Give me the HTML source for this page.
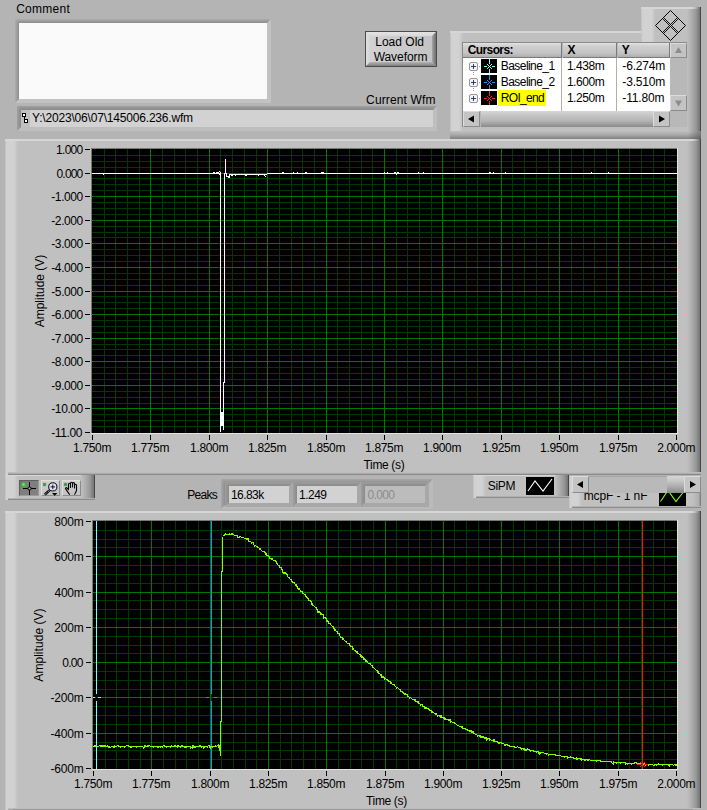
<!DOCTYPE html>
<html><head><meta charset="utf-8"><title>Waveform viewer</title>
<style>
html,body{margin:0;padding:0;}
body{width:707px;height:810px;background:#b4b4b4;position:relative;overflow:hidden;
 font-family:"Liberation Sans",sans-serif;font-size:12px;color:#000;}
.a{position:absolute;}
.t{position:absolute;white-space:nowrap;line-height:14px;height:14px;}
.frame{position:absolute;background:#c0c0c0;}
.frame>.l{position:absolute;left:0;top:0;bottom:0;width:13px;background:linear-gradient(to right,#bcbcbc 0,#cecece 1px,#d2d2d2 2px,#d2d2d2 9px,#c0c0c0 13px);}
.frame>.r{position:absolute;right:0;top:0;bottom:0;width:14px;background:linear-gradient(to right,#c0c0c0 0,#b0b0b0 4px,#989898 9px,#787878 12.5px,#484848 13px,#444 14px);}
.frame>.tp{position:absolute;left:0;right:0;top:0;height:2px;background:linear-gradient(to right,#d6d6d6 0,#d6d6d6 calc(100% - 9px),rgba(214,214,214,0) calc(100% - 2px));}
.frame>.bt{position:absolute;left:3px;right:0;bottom:0;height:2px;background:linear-gradient(to bottom,#b2b2b2 0,#b2b2b2 50%,#8c8c8c 50%,#8c8c8c 100%);}
.frame>.bt3{position:absolute;left:3px;right:0;bottom:0;height:3px;background:linear-gradient(to bottom,#bcbcbc 0,#bcbcbc 33%,#acacac 33%,#acacac 67%,#8a8a8a 67%,#8a8a8a 100%);}
.sunk{position:absolute;background:#d2d2d2;box-sizing:border-box;}
svg{position:absolute;left:0;top:0;}
svg text{font-family:"Liberation Sans",sans-serif;font-size:12px;fill:#000;}
</style></head>
<body>
<div class="t" style="left:16.19px;top:2px;letter-spacing:0.264px;">Comment</div>
<div class="a" style="left:15px;top:19px;width:256px;height:84px;background:#c2c2c2;"></div>
<div class="a" style="left:15px;top:19px;width:256px;height:4px;background:linear-gradient(to bottom,#adadad,#8c8c8c);clip-path:polygon(0 0,100% 0,252px 100%,4px 100%);"></div>
<div class="a" style="left:15px;top:19px;width:4px;height:84px;background:linear-gradient(to right,#adadad,#8c8c8c);clip-path:polygon(0 0,100% 4px,100% 80px,0 100%);"></div>
<div class="a" style="left:19px;top:23px;width:248px;height:76px;background:#fafafa;"></div>
<div class="a" style="left:17px;top:106px;width:420px;height:25px;background:#bebebe;"></div>
<div class="a" style="left:17px;top:106px;width:420px;height:4px;background:linear-gradient(to bottom,#a0a0a0,#888888);clip-path:polygon(0 0,100% 0,416px 100%,4px 100%);"></div>
<div class="a" style="left:17px;top:106px;width:4px;height:25px;background:linear-gradient(to right,#a0a0a0,#888888);clip-path:polygon(0 0,100% 4px,100% 21px,0 100%);"></div>
<div class="a" style="left:21px;top:110px;width:412px;height:17px;background:#d2d2d2;"></div>
<div class="a" style="left:21px;top:110px;width:9px;height:17px;background:#c0c0c0;"></div>
<svg width="707" height="810" shape-rendering="crispEdges"><rect x="22" y="113" width="4" height="4" fill="#000"/><rect x="23" y="114" width="2" height="2" fill="#fff"/><rect x="24" y="117" width="1" height="3" fill="#000"/><rect x="24" y="119" width="4" height="4" fill="#000"/><rect x="25" y="120" width="2" height="2" fill="#fff"/></svg>
<div class="t" style="left:32.04px;top:111px;letter-spacing:-0.187px;">Y:\2023\06\07\145006.236.wfm</div>
<div class="t" style="left:366.09px;top:92.6px;letter-spacing:0.140px;">Current Wfm</div>
<div class="a" style="left:365px;top:31px;width:72px;height:36px;background:#4c4c4c;"></div>
<div class="a" style="left:366px;top:32px;width:70px;height:34px;background:linear-gradient(to right,#d4d4d4 0,#cdcdcd 30%,#c3c3c3 100%);"></div>
<div class="a" style="left:366px;top:32px;width:70px;height:4px;background:linear-gradient(to bottom,#e4e4e4,#d8d8d8);clip-path:polygon(0 0,100% 0,66px 100%,4px 100%);"></div>
<div class="a" style="left:366px;top:32px;width:4px;height:34px;background:linear-gradient(to right,#e0e0e0,#d4d4d4);clip-path:polygon(0 0,100% 4px,100% 30px,0 100%);"></div>
<div class="a" style="left:432px;top:32px;width:4px;height:34px;background:linear-gradient(to right,#a6a6a6,#6c6c6c);clip-path:polygon(0 4px,100% 0,100% 100%,0 30px);"></div>
<div class="a" style="left:366px;top:62px;width:70px;height:4px;background:linear-gradient(to bottom,#b4b4b4,#7e7e7e);clip-path:polygon(4px 0,66px 0,100% 100%,0 100%);"></div>
<div class="t" style="left:375.22px;top:34.7px;letter-spacing:0.008px;">Load Old</div>
<div class="t" style="left:373.65px;top:49.6px;letter-spacing:-0.061px;">Waveform</div>
<div class="frame" style="left:450px;top:31px;width:251px;height:108px;"><div class="l"></div><div class="r"></div><div class="tp"></div><div class="a" style="left:0;right:0;bottom:0;height:8px;background:linear-gradient(to bottom,#c0c0c0,#a8a8a8 50%,#808080 100%);"></div><div class="a" style="right:0;bottom:0;width:13px;height:8px;background:linear-gradient(to right,rgba(0,0,0,0),rgba(60,60,60,.5));"></div></div>
<div class="frame" style="left:641px;top:7px;width:60px;height:35px;"><div class="l" style="width:14px;background:linear-gradient(to right,#bcbcbc 0,#cecece 1px,#d2d2d2 2px,#d2d2d2 11px,#c0c0c0 14px)"></div><div class="r" style="width:14px"></div><div class="tp"></div></div>
<svg class="a" style="left:654px;top:9px" width="33" height="33" viewBox="0 0 33 33"><g fill="none" stroke="#000" stroke-width="1"><path d="M16.5 1.5 L31.5 16.5 L16.5 31.5 L1.5 16.5 Z"/><path d="M8.5 9.5 L23.5 24.5 M9.5 8.5 L24.5 23.5 M23.5 8.5 L8.5 23.5 M24.5 9.5 L9.5 24.5" stroke-width="0.9"/></g></svg>
<div class="a" style="left:462px;top:42px;width:225px;height:85px;background:#8a8a8a;"></div>
<div class="a" style="left:463px;top:43px;width:224px;height:84px;background:#b8b8b8;"></div>
<div class="a" style="left:463px;top:58px;width:207px;height:53px;background:#fff;"></div>
<div class="a" style="left:463px;top:43px;width:99px;height:15px;box-sizing:border-box;border-right:1px solid #7a7a7a;border-bottom:1px solid #7a7a7a;background:linear-gradient(to bottom,#e4e4e4 0,#cfcfcf 3px,#c4c4c4 10px,#a8a8a8 15px);"></div>
<div class="a" style="left:563px;top:43px;width:54px;height:15px;box-sizing:border-box;border-right:1px solid #7a7a7a;border-bottom:1px solid #7a7a7a;background:linear-gradient(to bottom,#e4e4e4 0,#cfcfcf 3px,#c4c4c4 10px,#a8a8a8 15px);"></div>
<div class="a" style="left:618px;top:43px;width:52px;height:15px;box-sizing:border-box;border-right:1px solid #7a7a7a;border-bottom:1px solid #7a7a7a;background:linear-gradient(to bottom,#e4e4e4 0,#cfcfcf 3px,#c4c4c4 10px,#a8a8a8 15px);"></div>
<div class="a" style="left:561px;top:58px;width:1px;height:53px;background:#b0b0b0;"></div>
<div class="a" style="left:616px;top:58px;width:1px;height:53px;background:#b0b0b0;"></div>
<div class="t" style="left:467.81px;top:43.1px;letter-spacing:-0.623px;"><b>Cursors:</b></div>
<div class="t" style="left:567.39px;top:43.1px;letter-spacing:0.207px;"><b>X</b></div>
<div class="t" style="left:621.79px;top:43.1px;letter-spacing:0.395px;"><b>Y</b></div>
<svg class="a" style="left:469px;top:62px" width="12" height="9" viewBox="0 0 12 9"><rect x="0.5" y="0.5" width="8" height="8" rx="1.5" fill="#f4f4f4" stroke="#969696"/><path d="M2 4.5h5M4.5 2v5" stroke="#283a90" stroke-width="1"/><rect x="10" y="4" width="1" height="1" fill="#a0a0a0"/></svg>
<svg class="a" style="left:481px;top:59px" width="16" height="14" viewBox="0 0 16 14"><rect width="16" height="14" fill="#000"/><g stroke="#7fffff" stroke-width="1" fill="none"><path d="M8.5 0v5M8.5 10v4M3 7.5h3M11 7.5h3M6 5l5 5M11 5l-5 5"/></g></svg>
<div class="t" style="left:500.82px;top:58.6px;letter-spacing:-0.568px;">Baseline_1</div>
<div class="t" style="left:566.89px;top:58.6px;letter-spacing:-0.444px;">1.438m</div>
<div class="t" style="left:622.37px;top:58.6px;letter-spacing:-0.183px;">-6.274m</div>
<svg class="a" style="left:469px;top:78px" width="12" height="9" viewBox="0 0 12 9"><rect x="0.5" y="0.5" width="8" height="8" rx="1.5" fill="#f4f4f4" stroke="#969696"/><path d="M2 4.5h5M4.5 2v5" stroke="#283a90" stroke-width="1"/><rect x="10" y="4" width="1" height="1" fill="#a0a0a0"/></svg>
<svg class="a" style="left:481px;top:75px" width="16" height="14" viewBox="0 0 16 14"><rect width="16" height="14" fill="#000"/><g stroke="#2090ff" stroke-width="1" fill="none"><path d="M8.5 0v5M8.5 10v4M3 7.5h3M11 7.5h3M6 5l5 5M11 5l-5 5"/></g></svg>
<div class="t" style="left:500.82px;top:74.6px;letter-spacing:-0.566px;">Baseline_2</div>
<div class="t" style="left:566.89px;top:74.6px;letter-spacing:-0.444px;">1.600m</div>
<div class="t" style="left:622.37px;top:74.6px;letter-spacing:-0.183px;">-3.510m</div>
<svg class="a" style="left:469px;top:94px" width="12" height="9" viewBox="0 0 12 9"><rect x="0.5" y="0.5" width="8" height="8" rx="1.5" fill="#f4f4f4" stroke="#969696"/><path d="M2 4.5h5M4.5 2v5" stroke="#283a90" stroke-width="1"/><rect x="10" y="4" width="1" height="1" fill="#a0a0a0"/></svg>
<svg class="a" style="left:481px;top:91px" width="16" height="14" viewBox="0 0 16 14"><rect width="16" height="14" fill="#000"/><g stroke="#ff2020" stroke-width="1" fill="none"><path d="M8.5 0v5M8.5 10v4M3 7.5h3M11 7.5h3M6 5l5 5M11 5l-5 5"/></g></svg>
<div class="a" style="left:498px;top:90px;width:48px;height:16px;background:#ffff00;"></div>
<div class="t" style="left:500.82px;top:90.6px;letter-spacing:-0.679px;">ROI_end</div>
<div class="t" style="left:566.89px;top:90.6px;letter-spacing:-0.444px;">1.250m</div>
<div class="t" style="left:622.37px;top:90.6px;letter-spacing:-0.183px;">-11.80m</div>
<div class="a" style="left:473px;top:72px;width:1px;height:3px;background:repeating-linear-gradient(to bottom,#999 0,#999 1px,transparent 1px,transparent 2px);"></div>
<div class="a" style="left:473px;top:88px;width:1px;height:3px;background:repeating-linear-gradient(to bottom,#999 0,#999 1px,transparent 1px,transparent 2px);"></div>
<div class="a" style="left:670px;top:43px;width:17px;height:15px;box-sizing:border-box;border:1px solid;border-color:#dcdcdc #8c8c8c #8c8c8c #dcdcdc;background:#c4c4c4;"></div>
<svg width="707" height="810"><polygon points="675,53 682,53 678.5,47" fill="#8c8c8c"/></svg>
<div class="a" style="left:670px;top:95px;width:17px;height:16px;box-sizing:border-box;border:1px solid;border-color:#dcdcdc #8c8c8c #8c8c8c #dcdcdc;background:#c4c4c4;"></div>
<svg width="707" height="810"><polygon points="675,100.5 682,100.5 678.5,106.5" fill="#8c8c8c"/></svg>
<div class="a" style="left:481px;top:111px;width:172px;height:16px;background:linear-gradient(to bottom,#d6d6d6 0,#c6c6c6 4px,#b4b4b4 10px,#8a8a8a 16px);"></div>
<div class="a" style="left:463px;top:111px;width:17px;height:16px;box-sizing:border-box;border:1px solid;border-color:#dcdcdc #8c8c8c #8c8c8c #dcdcdc;background:#c4c4c4;"></div>
<svg width="707" height="810"><polygon points="474,115.5 474,122.5 468,119" fill="#000"/></svg>
<div class="a" style="left:653px;top:111px;width:17px;height:16px;box-sizing:border-box;border:1px solid;border-color:#dcdcdc #8c8c8c #8c8c8c #dcdcdc;background:#c4c4c4;"></div>
<svg width="707" height="810"><polygon points="659,115.5 659,122.5 665,119" fill="#000"/></svg>
<div class="frame" style="left:5px;top:139px;width:696px;height:336px;"><div class="l"></div><div class="r"></div><div class="tp"></div><div class="bt3"></div></div>
<div class="a" style="left:91px;top:148px;width:587px;height:286px;background:#e4e4e4;"></div>
<div class="a" style="left:91px;top:148px;width:586px;height:285px;background:#787878;"></div>
<div class="a" style="left:92px;top:149px;width:585px;height:284px;background:#000;"></div>
<div class="frame" style="left:5px;top:511px;width:696px;height:300px;"><div class="l"></div><div class="r"></div><div class="tp"></div><div class="bt3"></div></div>
<div class="a" style="left:92px;top:520px;width:586px;height:250px;background:#e4e4e4;"></div>
<div class="a" style="left:92px;top:520px;width:585px;height:249px;background:#787878;"></div>
<div class="a" style="left:93px;top:521px;width:584px;height:248px;background:#000;"></div>
<div class="a" style="left:13px;top:809px;width:680px;height:1px;background:#9a9a9a;"></div>
<svg width="707" height="810" shape-rendering="crispEdges"><rect x="104" y="149" width="1" height="284" fill="#003a00"/><rect x="115" y="149" width="1" height="284" fill="#003a00"/><rect x="127" y="149" width="1" height="284" fill="#003a00"/><rect x="139" y="149" width="1" height="284" fill="#003a00"/><rect x="162" y="149" width="1" height="284" fill="#003a00"/><rect x="174" y="149" width="1" height="284" fill="#003a00"/><rect x="185" y="149" width="1" height="284" fill="#003a00"/><rect x="197" y="149" width="1" height="284" fill="#003a00"/><rect x="220" y="149" width="1" height="284" fill="#003a00"/><rect x="232" y="149" width="1" height="284" fill="#003a00"/><rect x="244" y="149" width="1" height="284" fill="#003a00"/><rect x="256" y="149" width="1" height="284" fill="#003a00"/><rect x="279" y="149" width="1" height="284" fill="#003a00"/><rect x="291" y="149" width="1" height="284" fill="#003a00"/><rect x="302" y="149" width="1" height="284" fill="#003a00"/><rect x="314" y="149" width="1" height="284" fill="#003a00"/><rect x="337" y="149" width="1" height="284" fill="#003a00"/><rect x="349" y="149" width="1" height="284" fill="#003a00"/><rect x="361" y="149" width="1" height="284" fill="#003a00"/><rect x="372" y="149" width="1" height="284" fill="#003a00"/><rect x="396" y="149" width="1" height="284" fill="#003a00"/><rect x="407" y="149" width="1" height="284" fill="#003a00"/><rect x="419" y="149" width="1" height="284" fill="#003a00"/><rect x="431" y="149" width="1" height="284" fill="#003a00"/><rect x="454" y="149" width="1" height="284" fill="#003a00"/><rect x="466" y="149" width="1" height="284" fill="#003a00"/><rect x="477" y="149" width="1" height="284" fill="#003a00"/><rect x="489" y="149" width="1" height="284" fill="#003a00"/><rect x="512" y="149" width="1" height="284" fill="#003a00"/><rect x="524" y="149" width="1" height="284" fill="#003a00"/><rect x="536" y="149" width="1" height="284" fill="#003a00"/><rect x="548" y="149" width="1" height="284" fill="#003a00"/><rect x="571" y="149" width="1" height="284" fill="#003a00"/><rect x="583" y="149" width="1" height="284" fill="#003a00"/><rect x="594" y="149" width="1" height="284" fill="#003a00"/><rect x="606" y="149" width="1" height="284" fill="#003a00"/><rect x="629" y="149" width="1" height="284" fill="#003a00"/><rect x="641" y="149" width="1" height="284" fill="#003a00"/><rect x="653" y="149" width="1" height="284" fill="#003a00"/><rect x="664" y="149" width="1" height="284" fill="#003a00"/><rect x="92" y="155" width="585" height="1" fill="#003a00"/><rect x="92" y="161" width="585" height="1" fill="#003a00"/><rect x="92" y="167" width="585" height="1" fill="#003a00"/><rect x="92" y="178" width="585" height="1" fill="#003a00"/><rect x="92" y="184" width="585" height="1" fill="#003a00"/><rect x="92" y="190" width="585" height="1" fill="#003a00"/><rect x="92" y="202" width="585" height="1" fill="#003a00"/><rect x="92" y="208" width="585" height="1" fill="#003a00"/><rect x="92" y="214" width="585" height="1" fill="#003a00"/><rect x="92" y="226" width="585" height="1" fill="#003a00"/><rect x="92" y="232" width="585" height="1" fill="#003a00"/><rect x="92" y="237" width="585" height="1" fill="#003a00"/><rect x="92" y="249" width="585" height="1" fill="#003a00"/><rect x="92" y="255" width="585" height="1" fill="#003a00"/><rect x="92" y="261" width="585" height="1" fill="#003a00"/><rect x="92" y="273" width="585" height="1" fill="#003a00"/><rect x="92" y="279" width="585" height="1" fill="#003a00"/><rect x="92" y="285" width="585" height="1" fill="#003a00"/><rect x="92" y="296" width="585" height="1" fill="#003a00"/><rect x="92" y="302" width="585" height="1" fill="#003a00"/><rect x="92" y="308" width="585" height="1" fill="#003a00"/><rect x="92" y="320" width="585" height="1" fill="#003a00"/><rect x="92" y="326" width="585" height="1" fill="#003a00"/><rect x="92" y="332" width="585" height="1" fill="#003a00"/><rect x="92" y="344" width="585" height="1" fill="#003a00"/><rect x="92" y="349" width="585" height="1" fill="#003a00"/><rect x="92" y="355" width="585" height="1" fill="#003a00"/><rect x="92" y="367" width="585" height="1" fill="#003a00"/><rect x="92" y="373" width="585" height="1" fill="#003a00"/><rect x="92" y="379" width="585" height="1" fill="#003a00"/><rect x="92" y="391" width="585" height="1" fill="#003a00"/><rect x="92" y="397" width="585" height="1" fill="#003a00"/><rect x="92" y="403" width="585" height="1" fill="#003a00"/><rect x="92" y="414" width="585" height="1" fill="#003a00"/><rect x="92" y="420" width="585" height="1" fill="#003a00"/><rect x="92" y="426" width="585" height="1" fill="#003a00"/><rect x="150" y="149" width="1" height="284" fill="#007800"/><rect x="209" y="149" width="1" height="284" fill="#007800"/><rect x="267" y="149" width="1" height="284" fill="#007800"/><rect x="326" y="149" width="1" height="284" fill="#007800"/><rect x="384" y="149" width="1" height="284" fill="#007800"/><rect x="442" y="149" width="1" height="284" fill="#007800"/><rect x="501" y="149" width="1" height="284" fill="#007800"/><rect x="559" y="149" width="1" height="284" fill="#007800"/><rect x="618" y="149" width="1" height="284" fill="#007800"/><rect x="92" y="173" width="585" height="1" fill="#007800"/><rect x="92" y="196" width="585" height="1" fill="#007800"/><rect x="92" y="220" width="585" height="1" fill="#007800"/><rect x="92" y="243" width="585" height="1" fill="#007800"/><rect x="92" y="267" width="585" height="1" fill="#007800"/><rect x="92" y="291" width="585" height="1" fill="#007800"/><rect x="92" y="314" width="585" height="1" fill="#007800"/><rect x="92" y="338" width="585" height="1" fill="#007800"/><rect x="92" y="361" width="585" height="1" fill="#007800"/><rect x="92" y="385" width="585" height="1" fill="#007800"/><rect x="92" y="408" width="585" height="1" fill="#007800"/><rect x="92" y="435" width="1" height="5" fill="#000"/><rect x="150" y="435" width="1" height="5" fill="#000"/><rect x="209" y="435" width="1" height="5" fill="#000"/><rect x="267" y="435" width="1" height="5" fill="#000"/><rect x="326" y="435" width="1" height="5" fill="#000"/><rect x="384" y="435" width="1" height="5" fill="#000"/><rect x="442" y="435" width="1" height="5" fill="#000"/><rect x="501" y="435" width="1" height="5" fill="#000"/><rect x="559" y="435" width="1" height="5" fill="#000"/><rect x="618" y="435" width="1" height="5" fill="#000"/><rect x="676" y="435" width="1" height="5" fill="#000"/><rect x="85" y="149" width="5" height="1" fill="#000"/><rect x="85" y="173" width="5" height="1" fill="#000"/><rect x="85" y="196" width="5" height="1" fill="#000"/><rect x="85" y="220" width="5" height="1" fill="#000"/><rect x="85" y="243" width="5" height="1" fill="#000"/><rect x="85" y="267" width="5" height="1" fill="#000"/><rect x="85" y="291" width="5" height="1" fill="#000"/><rect x="85" y="314" width="5" height="1" fill="#000"/><rect x="85" y="338" width="5" height="1" fill="#000"/><rect x="85" y="361" width="5" height="1" fill="#000"/><rect x="85" y="385" width="5" height="1" fill="#000"/><rect x="85" y="408" width="5" height="1" fill="#000"/><rect x="85" y="432" width="5" height="1" fill="#000"/><rect x="92" y="173" width="129" height="1" fill="#ffffff"/><rect x="267" y="173" width="410" height="1" fill="#ffffff"/><rect x="229" y="174" width="38" height="1" fill="#ffffff"/><rect x="103" y="174" width="1" height="1" fill="#ffffff"/><rect x="213" y="172" width="1" height="1" fill="#ffffff"/><rect x="214" y="172" width="1" height="1" fill="#ffffff"/><rect x="216" y="172" width="1" height="1" fill="#ffffff"/><rect x="217" y="172" width="1" height="1" fill="#ffffff"/><rect x="218" y="172" width="1" height="1" fill="#ffffff"/><rect x="219" y="171" width="1" height="1" fill="#ffffff"/><rect x="219" y="174" width="1" height="1" fill="#ffffff"/><rect x="231" y="175" width="1" height="1" fill="#ffffff"/><rect x="232" y="175" width="1" height="1" fill="#ffffff"/><rect x="235" y="175" width="1" height="1" fill="#ffffff"/><rect x="245" y="175" width="1" height="1" fill="#ffffff"/><rect x="246" y="175" width="1" height="1" fill="#ffffff"/><rect x="258" y="175" width="1" height="1" fill="#ffffff"/><rect x="264" y="175" width="1" height="1" fill="#ffffff"/><rect x="265" y="176" width="1" height="1" fill="#ffffff"/><rect x="282" y="172" width="1" height="1" fill="#ffffff"/><rect x="283" y="172" width="1" height="1" fill="#ffffff"/><rect x="293" y="172" width="1" height="1" fill="#ffffff"/><rect x="297" y="172" width="1" height="1" fill="#ffffff"/><rect x="305" y="172" width="1" height="1" fill="#ffffff"/><rect x="306" y="172" width="1" height="1" fill="#ffffff"/><rect x="321" y="172" width="1" height="1" fill="#ffffff"/><rect x="322" y="172" width="1" height="1" fill="#ffffff"/><rect x="323" y="172" width="1" height="1" fill="#ffffff"/><rect x="384" y="172" width="1" height="1" fill="#ffffff"/><rect x="387" y="172" width="1" height="1" fill="#ffffff"/><rect x="394" y="172" width="1" height="1" fill="#ffffff"/><rect x="395" y="172" width="1" height="1" fill="#ffffff"/><rect x="397" y="172" width="1" height="1" fill="#ffffff"/><rect x="398" y="172" width="1" height="1" fill="#ffffff"/><rect x="418" y="172" width="1" height="1" fill="#ffffff"/><rect x="423" y="172" width="1" height="1" fill="#ffffff"/><rect x="489" y="172" width="1" height="1" fill="#ffffff"/><rect x="490" y="172" width="1" height="1" fill="#ffffff"/><rect x="493" y="172" width="1" height="1" fill="#ffffff"/><rect x="505" y="172" width="1" height="1" fill="#ffffff"/><rect x="591" y="172" width="1" height="1" fill="#ffffff"/><rect x="608" y="172" width="1" height="1" fill="#ffffff"/><rect x="396" y="174" width="1" height="1" fill="#ffffff"/><rect x="220" y="172" width="1" height="260" fill="#ffffff"/><rect x="224" y="173" width="1" height="210" fill="#ffffff"/><rect x="223" y="382" width="1" height="48" fill="#ffffff"/><rect x="221" y="412" width="2" height="14" fill="#ffffff"/><rect x="225" y="159" width="1" height="15" fill="#ffffff"/><rect x="226" y="173" width="1" height="4" fill="#ffffff"/><rect x="226" y="176" width="3" height="1" fill="#ffffff"/><rect x="228" y="177" width="2" height="1" fill="#ffffff"/><rect x="229" y="174" width="1" height="3" fill="#ffffff"/></svg>
<div class="t" style="left:56.09px;top:142.8px;letter-spacing:-0.712px;">1.000</div>
<div class="t" style="left:56.53px;top:166.8px;letter-spacing:-0.823px;">0.000</div>
<div class="t" style="left:51.27px;top:189.8px;letter-spacing:-0.405px;">-1.000</div>
<div class="t" style="left:51.27px;top:213.8px;letter-spacing:-0.405px;">-2.000</div>
<div class="t" style="left:51.27px;top:236.8px;letter-spacing:-0.405px;">-3.000</div>
<div class="t" style="left:51.27px;top:260.8px;letter-spacing:-0.405px;">-4.000</div>
<div class="t" style="left:51.27px;top:284.8px;letter-spacing:-0.405px;">-5.000</div>
<div class="t" style="left:51.27px;top:307.8px;letter-spacing:-0.405px;">-6.000</div>
<div class="t" style="left:51.27px;top:331.8px;letter-spacing:-0.405px;">-7.000</div>
<div class="t" style="left:51.27px;top:354.8px;letter-spacing:-0.405px;">-8.000</div>
<div class="t" style="left:51.27px;top:378.8px;letter-spacing:-0.405px;">-9.000</div>
<div class="t" style="left:51.27px;top:401.8px;letter-spacing:-0.405px;">-10.00</div>
<div class="t" style="left:51.27px;top:425.8px;letter-spacing:-0.405px;">-11.00</div>
<div class="t" style="left:73.04px;top:440.5px;letter-spacing:-0.324px;">1.750m</div>
<div class="t" style="left:131.04px;top:440.5px;letter-spacing:-0.324px;">1.775m</div>
<div class="t" style="left:190.04px;top:440.5px;letter-spacing:-0.324px;">1.800m</div>
<div class="t" style="left:248.04px;top:440.5px;letter-spacing:-0.324px;">1.825m</div>
<div class="t" style="left:307.04px;top:440.5px;letter-spacing:-0.324px;">1.850m</div>
<div class="t" style="left:365.04px;top:440.5px;letter-spacing:-0.324px;">1.875m</div>
<div class="t" style="left:423.04px;top:440.5px;letter-spacing:-0.324px;">1.900m</div>
<div class="t" style="left:482.04px;top:440.5px;letter-spacing:-0.324px;">1.925m</div>
<div class="t" style="left:540.04px;top:440.5px;letter-spacing:-0.324px;">1.950m</div>
<div class="t" style="left:599.04px;top:440.5px;letter-spacing:-0.324px;">1.975m</div>
<div class="t" style="left:657.35px;top:440.5px;letter-spacing:-0.386px;">2.000m</div>
<div class="t" style="left:363.53px;top:457.6px;letter-spacing:-0.340px;">Time (s)</div>
<div class="t" style="left:-60px;width:200px;text-align:center;top:284px;transform:rotate(-90deg);transform-origin:100px 7px;">Amplitude (V)</div>
<svg width="707" height="810" shape-rendering="crispEdges"><rect x="105" y="521" width="1" height="248" fill="#003a00"/><rect x="116" y="521" width="1" height="248" fill="#003a00"/><rect x="128" y="521" width="1" height="248" fill="#003a00"/><rect x="140" y="521" width="1" height="248" fill="#003a00"/><rect x="163" y="521" width="1" height="248" fill="#003a00"/><rect x="175" y="521" width="1" height="248" fill="#003a00"/><rect x="186" y="521" width="1" height="248" fill="#003a00"/><rect x="198" y="521" width="1" height="248" fill="#003a00"/><rect x="221" y="521" width="1" height="248" fill="#003a00"/><rect x="233" y="521" width="1" height="248" fill="#003a00"/><rect x="245" y="521" width="1" height="248" fill="#003a00"/><rect x="256" y="521" width="1" height="248" fill="#003a00"/><rect x="280" y="521" width="1" height="248" fill="#003a00"/><rect x="291" y="521" width="1" height="248" fill="#003a00"/><rect x="303" y="521" width="1" height="248" fill="#003a00"/><rect x="315" y="521" width="1" height="248" fill="#003a00"/><rect x="338" y="521" width="1" height="248" fill="#003a00"/><rect x="350" y="521" width="1" height="248" fill="#003a00"/><rect x="361" y="521" width="1" height="248" fill="#003a00"/><rect x="373" y="521" width="1" height="248" fill="#003a00"/><rect x="396" y="521" width="1" height="248" fill="#003a00"/><rect x="408" y="521" width="1" height="248" fill="#003a00"/><rect x="419" y="521" width="1" height="248" fill="#003a00"/><rect x="431" y="521" width="1" height="248" fill="#003a00"/><rect x="454" y="521" width="1" height="248" fill="#003a00"/><rect x="466" y="521" width="1" height="248" fill="#003a00"/><rect x="478" y="521" width="1" height="248" fill="#003a00"/><rect x="489" y="521" width="1" height="248" fill="#003a00"/><rect x="513" y="521" width="1" height="248" fill="#003a00"/><rect x="524" y="521" width="1" height="248" fill="#003a00"/><rect x="536" y="521" width="1" height="248" fill="#003a00"/><rect x="548" y="521" width="1" height="248" fill="#003a00"/><rect x="571" y="521" width="1" height="248" fill="#003a00"/><rect x="583" y="521" width="1" height="248" fill="#003a00"/><rect x="594" y="521" width="1" height="248" fill="#003a00"/><rect x="606" y="521" width="1" height="248" fill="#003a00"/><rect x="629" y="521" width="1" height="248" fill="#003a00"/><rect x="641" y="521" width="1" height="248" fill="#003a00"/><rect x="653" y="521" width="1" height="248" fill="#003a00"/><rect x="664" y="521" width="1" height="248" fill="#003a00"/><rect x="93" y="530" width="584" height="1" fill="#003a00"/><rect x="93" y="539" width="584" height="1" fill="#003a00"/><rect x="93" y="547" width="584" height="1" fill="#003a00"/><rect x="93" y="565" width="584" height="1" fill="#003a00"/><rect x="93" y="574" width="584" height="1" fill="#003a00"/><rect x="93" y="583" width="584" height="1" fill="#003a00"/><rect x="93" y="600" width="584" height="1" fill="#003a00"/><rect x="93" y="609" width="584" height="1" fill="#003a00"/><rect x="93" y="618" width="584" height="1" fill="#003a00"/><rect x="93" y="636" width="584" height="1" fill="#003a00"/><rect x="93" y="645" width="584" height="1" fill="#003a00"/><rect x="93" y="653" width="584" height="1" fill="#003a00"/><rect x="93" y="671" width="584" height="1" fill="#003a00"/><rect x="93" y="680" width="584" height="1" fill="#003a00"/><rect x="93" y="689" width="584" height="1" fill="#003a00"/><rect x="93" y="706" width="584" height="1" fill="#003a00"/><rect x="93" y="715" width="584" height="1" fill="#003a00"/><rect x="93" y="724" width="584" height="1" fill="#003a00"/><rect x="93" y="742" width="584" height="1" fill="#003a00"/><rect x="93" y="750" width="584" height="1" fill="#003a00"/><rect x="93" y="759" width="584" height="1" fill="#003a00"/><rect x="151" y="521" width="1" height="248" fill="#007800"/><rect x="210" y="521" width="1" height="248" fill="#007800"/><rect x="268" y="521" width="1" height="248" fill="#007800"/><rect x="326" y="521" width="1" height="248" fill="#007800"/><rect x="385" y="521" width="1" height="248" fill="#007800"/><rect x="443" y="521" width="1" height="248" fill="#007800"/><rect x="501" y="521" width="1" height="248" fill="#007800"/><rect x="559" y="521" width="1" height="248" fill="#007800"/><rect x="618" y="521" width="1" height="248" fill="#007800"/><rect x="93" y="556" width="584" height="1" fill="#007800"/><rect x="93" y="592" width="584" height="1" fill="#007800"/><rect x="93" y="627" width="584" height="1" fill="#007800"/><rect x="93" y="662" width="584" height="1" fill="#007800"/><rect x="93" y="697" width="584" height="1" fill="#007800"/><rect x="93" y="733" width="584" height="1" fill="#007800"/><rect x="93" y="771" width="1" height="5" fill="#000"/><rect x="151" y="771" width="1" height="5" fill="#000"/><rect x="210" y="771" width="1" height="5" fill="#000"/><rect x="268" y="771" width="1" height="5" fill="#000"/><rect x="326" y="771" width="1" height="5" fill="#000"/><rect x="385" y="771" width="1" height="5" fill="#000"/><rect x="443" y="771" width="1" height="5" fill="#000"/><rect x="501" y="771" width="1" height="5" fill="#000"/><rect x="559" y="771" width="1" height="5" fill="#000"/><rect x="618" y="771" width="1" height="5" fill="#000"/><rect x="676" y="771" width="1" height="5" fill="#000"/><rect x="86" y="521" width="5" height="1" fill="#000"/><rect x="86" y="556" width="5" height="1" fill="#000"/><rect x="86" y="592" width="5" height="1" fill="#000"/><rect x="86" y="627" width="5" height="1" fill="#000"/><rect x="86" y="662" width="5" height="1" fill="#000"/><rect x="86" y="697" width="5" height="1" fill="#000"/><rect x="86" y="733" width="5" height="1" fill="#000"/><rect x="86" y="768" width="5" height="1" fill="#000"/><rect x="96" y="521" width="1" height="248" fill="#80ffff"/><rect x="96" y="694" width="1" height="7" fill="#000"/><rect x="93" y="697" width="2" height="1" fill="#80ffff"/><rect x="98" y="697" width="3" height="1" fill="#80ffff"/><rect x="211" y="521" width="1" height="248" fill="#2090ff"/><rect x="211" y="694" width="1" height="7" fill="#003000"/><rect x="206" y="697" width="3" height="1" fill="#2090ff"/><rect x="214" y="697" width="3" height="1" fill="#2090ff"/><rect x="642" y="521" width="1" height="248" fill="#f41a06"/></svg>
<svg width="707" height="810" shape-rendering="crispEdges"><g fill="#7fff00"><rect x="93" y="746" width="1" height="1"/><rect x="94" y="745" width="1" height="2"/><rect x="95" y="745" width="1" height="2"/><rect x="96" y="745" width="1" height="1"/><rect x="97" y="746" width="1" height="1"/><rect x="98" y="746" width="1" height="1"/><rect x="99" y="745" width="1" height="1"/><rect x="100" y="745" width="1" height="2"/><rect x="101" y="745" width="1" height="2"/><rect x="102" y="745" width="1" height="2"/><rect x="103" y="745" width="1" height="2"/><rect x="104" y="745" width="1" height="2"/><rect x="105" y="745" width="1" height="2"/><rect x="106" y="746" width="1" height="1"/><rect x="107" y="745" width="1" height="2"/><rect x="108" y="746" width="1" height="2"/><rect x="109" y="746" width="1" height="2"/><rect x="110" y="747" width="1" height="1"/><rect x="111" y="746" width="1" height="1"/><rect x="112" y="746" width="1" height="1"/><rect x="113" y="746" width="1" height="2"/><rect x="114" y="745" width="1" height="3"/><rect x="115" y="746" width="1" height="1"/><rect x="116" y="746" width="1" height="1"/><rect x="117" y="745" width="1" height="1"/><rect x="118" y="745" width="1" height="2"/><rect x="119" y="746" width="1" height="1"/><rect x="120" y="746" width="1" height="2"/><rect x="121" y="746" width="1" height="1"/><rect x="122" y="746" width="1" height="1"/><rect x="123" y="746" width="1" height="1"/><rect x="124" y="746" width="1" height="2"/><rect x="125" y="746" width="1" height="1"/><rect x="126" y="745" width="1" height="1"/><rect x="127" y="745" width="1" height="1"/><rect x="128" y="745" width="1" height="2"/><rect x="129" y="746" width="1" height="1"/><rect x="130" y="746" width="1" height="2"/><rect x="131" y="746" width="1" height="2"/><rect x="132" y="746" width="1" height="1"/><rect x="133" y="746" width="1" height="1"/><rect x="134" y="746" width="1" height="1"/><rect x="135" y="746" width="1" height="1"/><rect x="136" y="746" width="1" height="2"/><rect x="137" y="746" width="1" height="1"/><rect x="138" y="746" width="1" height="1"/><rect x="139" y="746" width="1" height="1"/><rect x="140" y="746" width="1" height="1"/><rect x="141" y="746" width="1" height="1"/><rect x="142" y="746" width="1" height="1"/><rect x="143" y="747" width="1" height="2"/><rect x="144" y="745" width="1" height="3"/><rect x="145" y="745" width="1" height="2"/><rect x="146" y="746" width="1" height="1"/><rect x="147" y="745" width="1" height="2"/><rect x="148" y="745" width="1" height="2"/><rect x="149" y="745" width="1" height="1"/><rect x="150" y="746" width="1" height="1"/><rect x="151" y="746" width="1" height="1"/><rect x="152" y="746" width="1" height="1"/><rect x="153" y="746" width="1" height="2"/><rect x="154" y="746" width="1" height="1"/><rect x="155" y="746" width="1" height="1"/><rect x="156" y="746" width="1" height="1"/><rect x="157" y="746" width="1" height="2"/><rect x="158" y="746" width="1" height="2"/><rect x="159" y="746" width="1" height="1"/><rect x="160" y="746" width="1" height="2"/><rect x="161" y="746" width="1" height="1"/><rect x="162" y="746" width="1" height="2"/><rect x="163" y="745" width="1" height="1"/><rect x="164" y="745" width="1" height="2"/><rect x="165" y="746" width="1" height="1"/><rect x="166" y="746" width="1" height="2"/><rect x="167" y="746" width="1" height="1"/><rect x="168" y="746" width="1" height="1"/><rect x="169" y="746" width="1" height="1"/><rect x="170" y="746" width="1" height="2"/><rect x="171" y="745" width="1" height="2"/><rect x="172" y="746" width="1" height="1"/><rect x="173" y="746" width="1" height="1"/><rect x="174" y="745" width="1" height="2"/><rect x="175" y="745" width="1" height="2"/><rect x="176" y="746" width="1" height="1"/><rect x="177" y="745" width="1" height="3"/><rect x="178" y="745" width="1" height="2"/><rect x="179" y="746" width="1" height="1"/><rect x="180" y="746" width="1" height="2"/><rect x="181" y="745" width="1" height="2"/><rect x="182" y="745" width="1" height="2"/><rect x="183" y="746" width="1" height="1"/><rect x="184" y="746" width="1" height="2"/><rect x="185" y="746" width="1" height="2"/><rect x="186" y="746" width="1" height="2"/><rect x="187" y="746" width="1" height="1"/><rect x="188" y="746" width="1" height="1"/><rect x="189" y="746" width="1" height="1"/><rect x="190" y="746" width="1" height="3"/><rect x="191" y="747" width="1" height="1"/><rect x="192" y="745" width="1" height="4"/><rect x="193" y="745" width="1" height="3"/><rect x="194" y="746" width="1" height="2"/><rect x="195" y="746" width="1" height="2"/><rect x="196" y="746" width="1" height="1"/><rect x="197" y="746" width="1" height="1"/><rect x="198" y="746" width="1" height="1"/><rect x="199" y="745" width="1" height="2"/><rect x="200" y="745" width="1" height="2"/><rect x="201" y="746" width="1" height="2"/><rect x="202" y="746" width="1" height="1"/><rect x="203" y="746" width="1" height="3"/><rect x="204" y="746" width="1" height="2"/><rect x="205" y="746" width="1" height="1"/><rect x="206" y="746" width="1" height="1"/><rect x="207" y="746" width="1" height="2"/><rect x="208" y="745" width="1" height="1"/><rect x="209" y="745" width="1" height="3"/><rect x="210" y="746" width="1" height="3"/><rect x="211" y="746" width="1" height="1"/><rect x="212" y="746" width="1" height="2"/><rect x="213" y="746" width="1" height="1"/><rect x="214" y="746" width="1" height="1"/><rect x="215" y="745" width="1" height="2"/><rect x="216" y="746" width="1" height="1"/><rect x="217" y="745" width="1" height="1"/><rect x="218" y="745" width="1" height="2"/><rect x="219" y="746" width="1" height="1"/><rect x="220" y="746" width="1" height="2"/><rect x="223" y="535" width="1" height="1"/><rect x="224" y="534" width="1" height="2"/><rect x="225" y="533" width="1" height="2"/><rect x="226" y="534" width="1" height="1"/><rect x="227" y="534" width="1" height="1"/><rect x="228" y="534" width="1" height="1"/><rect x="229" y="533" width="1" height="2"/><rect x="230" y="534" width="1" height="1"/><rect x="231" y="533" width="1" height="2"/><rect x="232" y="533" width="1" height="2"/><rect x="233" y="534" width="1" height="1"/><rect x="234" y="535" width="1" height="1"/><rect x="235" y="535" width="1" height="1"/><rect x="236" y="535" width="1" height="1"/><rect x="237" y="535" width="1" height="3"/><rect x="238" y="537" width="1" height="1"/><rect x="239" y="536" width="1" height="2"/><rect x="240" y="536" width="1" height="1"/><rect x="241" y="537" width="1" height="1"/><rect x="242" y="537" width="1" height="1"/><rect x="243" y="537" width="1" height="1"/><rect x="244" y="538" width="1" height="1"/><rect x="245" y="538" width="1" height="1"/><rect x="246" y="538" width="1" height="2"/><rect x="247" y="538" width="1" height="2"/><rect x="248" y="538" width="1" height="4"/><rect x="249" y="541" width="1" height="1"/><rect x="250" y="541" width="1" height="1"/><rect x="251" y="542" width="1" height="2"/><rect x="252" y="542" width="1" height="1"/><rect x="253" y="542" width="1" height="3"/><rect x="254" y="545" width="1" height="2"/><rect x="255" y="545" width="1" height="1"/><rect x="256" y="546" width="1" height="1"/><rect x="257" y="546" width="1" height="2"/><rect x="258" y="547" width="1" height="1"/><rect x="259" y="548" width="1" height="2"/><rect x="260" y="548" width="1" height="2"/><rect x="261" y="550" width="1" height="1"/><rect x="262" y="551" width="1" height="1"/><rect x="263" y="551" width="1" height="1"/><rect x="264" y="551" width="1" height="2"/><rect x="265" y="552" width="1" height="3"/><rect x="266" y="553" width="1" height="3"/><rect x="267" y="555" width="1" height="1"/><rect x="268" y="555" width="1" height="2"/><rect x="269" y="556" width="1" height="3"/><rect x="270" y="558" width="1" height="1"/><rect x="271" y="558" width="1" height="2"/><rect x="272" y="558" width="1" height="2"/><rect x="273" y="560" width="1" height="1"/><rect x="274" y="560" width="1" height="1"/><rect x="275" y="560" width="1" height="2"/><rect x="276" y="561" width="1" height="3"/><rect x="277" y="563" width="1" height="2"/><rect x="278" y="565" width="1" height="1"/><rect x="279" y="565" width="1" height="3"/><rect x="280" y="567" width="1" height="1"/><rect x="281" y="567" width="1" height="3"/><rect x="282" y="569" width="1" height="4"/><rect x="283" y="572" width="1" height="2"/><rect x="284" y="572" width="1" height="2"/><rect x="285" y="572" width="1" height="2"/><rect x="286" y="573" width="1" height="2"/><rect x="287" y="574" width="1" height="3"/><rect x="288" y="577" width="1" height="1"/><rect x="289" y="577" width="1" height="2"/><rect x="290" y="579" width="1" height="1"/><rect x="291" y="579" width="1" height="3"/><rect x="292" y="581" width="1" height="2"/><rect x="293" y="582" width="1" height="1"/><rect x="294" y="582" width="1" height="2"/><rect x="295" y="584" width="1" height="2"/><rect x="296" y="584" width="1" height="3"/><rect x="297" y="586" width="1" height="3"/><rect x="298" y="588" width="1" height="2"/><rect x="299" y="588" width="1" height="2"/><rect x="300" y="590" width="1" height="2"/><rect x="301" y="591" width="1" height="1"/><rect x="302" y="591" width="1" height="3"/><rect x="303" y="593" width="1" height="1"/><rect x="304" y="594" width="1" height="1"/><rect x="305" y="594" width="1" height="3"/><rect x="306" y="596" width="1" height="2"/><rect x="307" y="597" width="1" height="2"/><rect x="308" y="598" width="1" height="3"/><rect x="309" y="600" width="1" height="1"/><rect x="310" y="600" width="1" height="2"/><rect x="311" y="601" width="1" height="4"/><rect x="312" y="603" width="1" height="3"/><rect x="313" y="605" width="1" height="1"/><rect x="314" y="606" width="1" height="1"/><rect x="315" y="607" width="1" height="1"/><rect x="316" y="607" width="1" height="3"/><rect x="317" y="609" width="1" height="4"/><rect x="318" y="611" width="1" height="2"/><rect x="319" y="611" width="1" height="2"/><rect x="320" y="612" width="1" height="3"/><rect x="321" y="613" width="1" height="2"/><rect x="322" y="614" width="1" height="1"/><rect x="323" y="614" width="1" height="5"/><rect x="324" y="617" width="1" height="1"/><rect x="325" y="617" width="1" height="2"/><rect x="326" y="618" width="1" height="4"/><rect x="327" y="620" width="1" height="2"/><rect x="328" y="621" width="1" height="3"/><rect x="329" y="623" width="1" height="1"/><rect x="330" y="623" width="1" height="2"/><rect x="331" y="625" width="1" height="1"/><rect x="332" y="626" width="1" height="1"/><rect x="333" y="626" width="1" height="3"/><rect x="334" y="628" width="1" height="3"/><rect x="335" y="629" width="1" height="2"/><rect x="336" y="631" width="1" height="1"/><rect x="337" y="631" width="1" height="3"/><rect x="338" y="633" width="1" height="1"/><rect x="339" y="633" width="1" height="3"/><rect x="340" y="636" width="1" height="2"/><rect x="341" y="637" width="1" height="1"/><rect x="342" y="637" width="1" height="3"/><rect x="343" y="638" width="1" height="2"/><rect x="344" y="640" width="1" height="1"/><rect x="345" y="641" width="1" height="1"/><rect x="346" y="641" width="1" height="2"/><rect x="347" y="643" width="1" height="1"/><rect x="348" y="643" width="1" height="1"/><rect x="349" y="643" width="1" height="3"/><rect x="350" y="645" width="1" height="2"/><rect x="351" y="646" width="1" height="1"/><rect x="352" y="646" width="1" height="4"/><rect x="353" y="648" width="1" height="2"/><rect x="354" y="650" width="1" height="1"/><rect x="355" y="650" width="1" height="2"/><rect x="356" y="651" width="1" height="2"/><rect x="357" y="651" width="1" height="3"/><rect x="358" y="653" width="1" height="1"/><rect x="359" y="654" width="1" height="1"/><rect x="360" y="654" width="1" height="3"/><rect x="361" y="655" width="1" height="3"/><rect x="362" y="656" width="1" height="2"/><rect x="363" y="657" width="1" height="3"/><rect x="364" y="658" width="1" height="2"/><rect x="365" y="659" width="1" height="3"/><rect x="366" y="660" width="1" height="2"/><rect x="367" y="661" width="1" height="2"/><rect x="368" y="663" width="1" height="1"/><rect x="369" y="663" width="1" height="1"/><rect x="370" y="663" width="1" height="2"/><rect x="371" y="665" width="1" height="1"/><rect x="372" y="665" width="1" height="3"/><rect x="373" y="667" width="1" height="1"/><rect x="374" y="668" width="1" height="1"/><rect x="375" y="669" width="1" height="1"/><rect x="376" y="670" width="1" height="1"/><rect x="377" y="670" width="1" height="3"/><rect x="378" y="671" width="1" height="3"/><rect x="379" y="673" width="1" height="1"/><rect x="380" y="674" width="1" height="2"/><rect x="381" y="674" width="1" height="4"/><rect x="382" y="676" width="1" height="2"/><rect x="383" y="676" width="1" height="2"/><rect x="384" y="677" width="1" height="3"/><rect x="385" y="678" width="1" height="1"/><rect x="386" y="679" width="1" height="1"/><rect x="387" y="679" width="1" height="2"/><rect x="388" y="680" width="1" height="2"/><rect x="389" y="681" width="1" height="1"/><rect x="390" y="681" width="1" height="3"/><rect x="391" y="682" width="1" height="2"/><rect x="392" y="684" width="1" height="1"/><rect x="393" y="684" width="1" height="1"/><rect x="394" y="684" width="1" height="2"/><rect x="395" y="686" width="1" height="1"/><rect x="396" y="687" width="1" height="2"/><rect x="397" y="687" width="1" height="1"/><rect x="398" y="688" width="1" height="1"/><rect x="399" y="689" width="1" height="1"/><rect x="400" y="689" width="1" height="3"/><rect x="401" y="691" width="1" height="1"/><rect x="402" y="691" width="1" height="2"/><rect x="403" y="692" width="1" height="2"/><rect x="404" y="693" width="1" height="2"/><rect x="405" y="693" width="1" height="2"/><rect x="406" y="694" width="1" height="1"/><rect x="407" y="694" width="1" height="3"/><rect x="408" y="696" width="1" height="1"/><rect x="409" y="697" width="1" height="2"/><rect x="410" y="697" width="1" height="1"/><rect x="411" y="698" width="1" height="1"/><rect x="412" y="699" width="1" height="1"/><rect x="413" y="699" width="1" height="1"/><rect x="414" y="699" width="1" height="2"/><rect x="415" y="699" width="1" height="3"/><rect x="416" y="701" width="1" height="1"/><rect x="417" y="701" width="1" height="2"/><rect x="418" y="701" width="1" height="3"/><rect x="419" y="703" width="1" height="1"/><rect x="420" y="704" width="1" height="2"/><rect x="421" y="704" width="1" height="1"/><rect x="422" y="704" width="1" height="3"/><rect x="423" y="706" width="1" height="1"/><rect x="424" y="706" width="1" height="3"/><rect x="425" y="707" width="1" height="2"/><rect x="426" y="707" width="1" height="2"/><rect x="427" y="708" width="1" height="1"/><rect x="428" y="708" width="1" height="2"/><rect x="429" y="709" width="1" height="2"/><rect x="430" y="710" width="1" height="1"/><rect x="431" y="710" width="1" height="3"/><rect x="432" y="711" width="1" height="2"/><rect x="433" y="712" width="1" height="1"/><rect x="434" y="713" width="1" height="1"/><rect x="435" y="713" width="1" height="2"/><rect x="436" y="713" width="1" height="2"/><rect x="437" y="715" width="1" height="2"/><rect x="438" y="715" width="1" height="1"/><rect x="439" y="715" width="1" height="2"/><rect x="440" y="715" width="1" height="3"/><rect x="441" y="715" width="1" height="3"/><rect x="442" y="717" width="1" height="1"/><rect x="443" y="717" width="1" height="2"/><rect x="444" y="717" width="1" height="3"/><rect x="445" y="718" width="1" height="2"/><rect x="446" y="719" width="1" height="1"/><rect x="447" y="719" width="1" height="1"/><rect x="448" y="719" width="1" height="2"/><rect x="449" y="719" width="1" height="2"/><rect x="450" y="719" width="1" height="4"/><rect x="451" y="721" width="1" height="1"/><rect x="452" y="722" width="1" height="1"/><rect x="453" y="722" width="1" height="1"/><rect x="454" y="722" width="1" height="2"/><rect x="455" y="723" width="1" height="1"/><rect x="456" y="724" width="1" height="1"/><rect x="457" y="725" width="1" height="1"/><rect x="458" y="725" width="1" height="1"/><rect x="459" y="726" width="1" height="1"/><rect x="460" y="726" width="1" height="1"/><rect x="461" y="726" width="1" height="2"/><rect x="462" y="726" width="1" height="3"/><rect x="463" y="728" width="1" height="1"/><rect x="464" y="728" width="1" height="1"/><rect x="465" y="728" width="1" height="2"/><rect x="466" y="729" width="1" height="1"/><rect x="467" y="729" width="1" height="2"/><rect x="468" y="730" width="1" height="1"/><rect x="469" y="730" width="1" height="2"/><rect x="470" y="730" width="1" height="2"/><rect x="471" y="730" width="1" height="3"/><rect x="472" y="731" width="1" height="2"/><rect x="473" y="731" width="1" height="3"/><rect x="474" y="733" width="1" height="1"/><rect x="475" y="734" width="1" height="1"/><rect x="476" y="734" width="1" height="1"/><rect x="477" y="735" width="1" height="2"/><rect x="478" y="735" width="1" height="1"/><rect x="479" y="735" width="1" height="2"/><rect x="480" y="735" width="1" height="3"/><rect x="481" y="736" width="1" height="2"/><rect x="482" y="736" width="1" height="2"/><rect x="483" y="736" width="1" height="2"/><rect x="484" y="737" width="1" height="2"/><rect x="485" y="737" width="1" height="2"/><rect x="486" y="737" width="1" height="4"/><rect x="487" y="738" width="1" height="2"/><rect x="488" y="738" width="1" height="1"/><rect x="489" y="738" width="1" height="3"/><rect x="490" y="739" width="1" height="1"/><rect x="491" y="740" width="1" height="1"/><rect x="492" y="740" width="1" height="1"/><rect x="493" y="739" width="1" height="3"/><rect x="494" y="739" width="1" height="3"/><rect x="495" y="741" width="1" height="1"/><rect x="496" y="741" width="1" height="1"/><rect x="497" y="741" width="1" height="2"/><rect x="498" y="742" width="1" height="2"/><rect x="499" y="742" width="1" height="2"/><rect x="500" y="742" width="1" height="1"/><rect x="501" y="742" width="1" height="2"/><rect x="502" y="743" width="1" height="1"/><rect x="503" y="743" width="1" height="1"/><rect x="504" y="744" width="1" height="2"/><rect x="505" y="744" width="1" height="2"/><rect x="506" y="744" width="1" height="1"/><rect x="507" y="744" width="1" height="2"/><rect x="508" y="745" width="1" height="1"/><rect x="509" y="745" width="1" height="2"/><rect x="510" y="746" width="1" height="1"/><rect x="511" y="746" width="1" height="1"/><rect x="512" y="746" width="1" height="1"/><rect x="513" y="746" width="1" height="1"/><rect x="514" y="746" width="1" height="2"/><rect x="515" y="747" width="1" height="1"/><rect x="516" y="747" width="1" height="1"/><rect x="517" y="746" width="1" height="1"/><rect x="518" y="747" width="1" height="1"/><rect x="519" y="747" width="1" height="1"/><rect x="520" y="747" width="1" height="2"/><rect x="521" y="748" width="1" height="2"/><rect x="522" y="748" width="1" height="1"/><rect x="523" y="748" width="1" height="2"/><rect x="524" y="748" width="1" height="3"/><rect x="525" y="749" width="1" height="2"/><rect x="526" y="749" width="1" height="2"/><rect x="527" y="748" width="1" height="2"/><rect x="528" y="749" width="1" height="1"/><rect x="529" y="749" width="1" height="2"/><rect x="530" y="750" width="1" height="2"/><rect x="531" y="750" width="1" height="1"/><rect x="532" y="750" width="1" height="1"/><rect x="533" y="750" width="1" height="2"/><rect x="534" y="751" width="1" height="1"/><rect x="535" y="751" width="1" height="1"/><rect x="536" y="751" width="1" height="2"/><rect x="537" y="751" width="1" height="1"/><rect x="538" y="751" width="1" height="3"/><rect x="539" y="752" width="1" height="3"/><rect x="540" y="752" width="1" height="2"/><rect x="541" y="752" width="1" height="1"/><rect x="542" y="752" width="1" height="1"/><rect x="543" y="752" width="1" height="1"/><rect x="544" y="753" width="1" height="1"/><rect x="545" y="753" width="1" height="1"/><rect x="546" y="753" width="1" height="2"/><rect x="547" y="753" width="1" height="1"/><rect x="548" y="754" width="1" height="2"/><rect x="549" y="754" width="1" height="1"/><rect x="550" y="754" width="1" height="1"/><rect x="551" y="754" width="1" height="1"/><rect x="552" y="754" width="1" height="1"/><rect x="553" y="754" width="1" height="1"/><rect x="554" y="754" width="1" height="1"/><rect x="555" y="754" width="1" height="2"/><rect x="556" y="755" width="1" height="1"/><rect x="557" y="755" width="1" height="1"/><rect x="558" y="755" width="1" height="1"/><rect x="559" y="755" width="1" height="1"/><rect x="560" y="755" width="1" height="1"/><rect x="561" y="756" width="1" height="1"/><rect x="562" y="756" width="1" height="1"/><rect x="563" y="756" width="1" height="1"/><rect x="564" y="756" width="1" height="2"/><rect x="565" y="756" width="1" height="1"/><rect x="566" y="756" width="1" height="1"/><rect x="567" y="756" width="1" height="3"/><rect x="568" y="757" width="1" height="1"/><rect x="569" y="757" width="1" height="1"/><rect x="570" y="756" width="1" height="2"/><rect x="571" y="757" width="1" height="1"/><rect x="572" y="757" width="1" height="1"/><rect x="573" y="757" width="1" height="2"/><rect x="574" y="758" width="1" height="1"/><rect x="575" y="758" width="1" height="1"/><rect x="576" y="757" width="1" height="3"/><rect x="577" y="758" width="1" height="2"/><rect x="578" y="758" width="1" height="1"/><rect x="579" y="758" width="1" height="1"/><rect x="580" y="758" width="1" height="2"/><rect x="581" y="758" width="1" height="3"/><rect x="582" y="759" width="1" height="1"/><rect x="583" y="759" width="1" height="1"/><rect x="584" y="759" width="1" height="2"/><rect x="585" y="759" width="1" height="2"/><rect x="586" y="759" width="1" height="1"/><rect x="587" y="759" width="1" height="2"/><rect x="588" y="759" width="1" height="2"/><rect x="589" y="759" width="1" height="1"/><rect x="590" y="760" width="1" height="1"/><rect x="591" y="760" width="1" height="1"/><rect x="592" y="760" width="1" height="1"/><rect x="593" y="760" width="1" height="1"/><rect x="594" y="760" width="1" height="1"/><rect x="595" y="760" width="1" height="1"/><rect x="596" y="760" width="1" height="2"/><rect x="597" y="760" width="1" height="1"/><rect x="598" y="760" width="1" height="1"/><rect x="599" y="760" width="1" height="1"/><rect x="600" y="760" width="1" height="2"/><rect x="601" y="761" width="1" height="1"/><rect x="602" y="761" width="1" height="1"/><rect x="603" y="761" width="1" height="1"/><rect x="604" y="761" width="1" height="1"/><rect x="605" y="761" width="1" height="1"/><rect x="606" y="761" width="1" height="1"/><rect x="607" y="761" width="1" height="1"/><rect x="608" y="761" width="1" height="1"/><rect x="609" y="761" width="1" height="1"/><rect x="610" y="761" width="1" height="1"/><rect x="611" y="761" width="1" height="2"/><rect x="612" y="763" width="1" height="1"/><rect x="613" y="761" width="1" height="4"/><rect x="614" y="762" width="1" height="1"/><rect x="615" y="762" width="1" height="1"/><rect x="616" y="762" width="1" height="2"/><rect x="617" y="762" width="1" height="1"/><rect x="618" y="762" width="1" height="1"/><rect x="619" y="762" width="1" height="1"/><rect x="620" y="762" width="1" height="2"/><rect x="621" y="762" width="1" height="1"/><rect x="622" y="762" width="1" height="1"/><rect x="623" y="762" width="1" height="1"/><rect x="624" y="762" width="1" height="1"/><rect x="625" y="762" width="1" height="3"/><rect x="626" y="763" width="1" height="1"/><rect x="627" y="763" width="1" height="2"/><rect x="628" y="763" width="1" height="1"/><rect x="629" y="763" width="1" height="1"/><rect x="630" y="763" width="1" height="1"/><rect x="631" y="763" width="1" height="2"/><rect x="632" y="763" width="1" height="1"/><rect x="633" y="763" width="1" height="1"/><rect x="634" y="762" width="1" height="2"/><rect x="635" y="762" width="1" height="1"/><rect x="636" y="762" width="1" height="2"/><rect x="637" y="763" width="1" height="1"/><rect x="638" y="763" width="1" height="1"/><rect x="639" y="763" width="1" height="2"/><rect x="640" y="763" width="1" height="1"/><rect x="641" y="763" width="1" height="1"/><rect x="642" y="763" width="1" height="1"/><rect x="643" y="763" width="1" height="2"/><rect x="644" y="763" width="1" height="1"/><rect x="645" y="764" width="1" height="2"/><rect x="646" y="764" width="1" height="1"/><rect x="647" y="764" width="1" height="1"/><rect x="648" y="764" width="1" height="2"/><rect x="649" y="764" width="1" height="1"/><rect x="650" y="764" width="1" height="1"/><rect x="651" y="764" width="1" height="1"/><rect x="652" y="764" width="1" height="1"/><rect x="653" y="765" width="1" height="1"/><rect x="654" y="764" width="1" height="2"/><rect x="655" y="764" width="1" height="1"/><rect x="656" y="764" width="1" height="2"/><rect x="657" y="764" width="1" height="1"/><rect x="658" y="763" width="1" height="2"/><rect x="659" y="764" width="1" height="1"/><rect x="660" y="764" width="1" height="1"/><rect x="661" y="764" width="1" height="1"/><rect x="662" y="764" width="1" height="2"/><rect x="663" y="764" width="1" height="1"/><rect x="664" y="764" width="1" height="1"/><rect x="665" y="764" width="1" height="1"/><rect x="666" y="764" width="1" height="1"/><rect x="667" y="764" width="1" height="1"/><rect x="668" y="764" width="1" height="2"/><rect x="669" y="764" width="1" height="3"/><rect x="670" y="764" width="1" height="1"/><rect x="671" y="764" width="1" height="1"/><rect x="672" y="764" width="1" height="1"/><rect x="673" y="765" width="1" height="1"/><rect x="674" y="764" width="1" height="1"/><rect x="675" y="764" width="1" height="2"/><rect x="676" y="764" width="1" height="2"/><rect x="220" y="721" width="1" height="35"/><rect x="218" y="744" width="1" height="4"/><rect x="219" y="745" width="1" height="6"/><rect x="221" y="571" width="1" height="151"/><rect x="222" y="537" width="1" height="35"/></g><g fill="#f41a06"><rect x="637" y="764" width="4" height="1"/><rect x="644" y="764" width="4" height="1"/><rect x="640" y="762" width="1" height="1"/><rect x="641" y="763" width="1" height="1"/><rect x="643" y="765" width="1" height="1"/><rect x="644" y="766" width="1" height="1"/><rect x="644" y="762" width="1" height="1"/><rect x="643" y="763" width="1" height="1"/><rect x="641" y="765" width="1" height="1"/><rect x="640" y="766" width="1" height="1"/><rect x="642" y="761" width="1" height="8"/></g></svg>
<div class="t" style="left:54.28px;top:514.8px;letter-spacing:-0.168px;">800m</div>
<div class="t" style="left:54.19px;top:549.8px;letter-spacing:-0.139px;">600m</div>
<div class="t" style="left:54.52px;top:585.8px;letter-spacing:-0.250px;">400m</div>
<div class="t" style="left:54.20px;top:620.8px;letter-spacing:-0.141px;">200m</div>
<div class="t" style="left:62.13px;top:655.8px;letter-spacing:-0.673px;">0.00</div>
<div class="t" style="left:50.47px;top:690.8px;letter-spacing:-0.172px;">-200m</div>
<div class="t" style="left:50.47px;top:726.8px;letter-spacing:-0.172px;">-400m</div>
<div class="t" style="left:50.47px;top:761.8px;letter-spacing:-0.172px;">-600m</div>
<div class="t" style="left:74.04px;top:776.9px;letter-spacing:-0.324px;">1.750m</div>
<div class="t" style="left:132.04px;top:776.9px;letter-spacing:-0.324px;">1.775m</div>
<div class="t" style="left:191.04px;top:776.9px;letter-spacing:-0.324px;">1.800m</div>
<div class="t" style="left:249.04px;top:776.9px;letter-spacing:-0.324px;">1.825m</div>
<div class="t" style="left:307.04px;top:776.9px;letter-spacing:-0.324px;">1.850m</div>
<div class="t" style="left:366.04px;top:776.9px;letter-spacing:-0.324px;">1.875m</div>
<div class="t" style="left:424.04px;top:776.9px;letter-spacing:-0.324px;">1.900m</div>
<div class="t" style="left:482.04px;top:776.9px;letter-spacing:-0.324px;">1.925m</div>
<div class="t" style="left:540.04px;top:776.9px;letter-spacing:-0.324px;">1.950m</div>
<div class="t" style="left:599.04px;top:776.9px;letter-spacing:-0.324px;">1.975m</div>
<div class="t" style="left:657.35px;top:776.9px;letter-spacing:-0.386px;">2.000m</div>
<div class="t" style="left:366.03px;top:794px;letter-spacing:-0.340px;">Time (s)</div>
<div class="t" style="left:-61px;width:200px;text-align:center;top:637.7px;transform:rotate(-90deg);transform-origin:100px 7px;letter-spacing:0.05px;">Amplitude (V)</div>
<div class="frame" style="left:5px;top:475px;width:90px;height:25px;"><div class="l"></div><div class="tp" style="height:1px"></div><div class="r"></div><div class="bt"></div></div>
<div class="a" style="left:19px;top:480px;width:20px;height:16px;box-sizing:border-box;border:1px solid;border-color:#5e5e5e #9a9a9a #9a9a9a #5e5e5e;background:linear-gradient(135deg,#6e6e6e 0,#7e7e7e 30%,#828282 100%);"></div>
<div class="a" style="left:41px;top:480px;width:19px;height:16px;box-sizing:border-box;border:1px solid;border-color:#e0e0e0 #8a8a8a #8a8a8a #e0e0e0;background:linear-gradient(to bottom,#d0d0d0,#c2c2c2);"></div>
<div class="a" style="left:62px;top:480px;width:19px;height:16px;box-sizing:border-box;border:1px solid;border-color:#e0e0e0 #8a8a8a #8a8a8a #e0e0e0;background:linear-gradient(to bottom,#d0d0d0,#c2c2c2);"></div>
<svg width="707" height="810"><g fill="none" stroke="#000" stroke-width="1"><path d="M29.5 482v13M23 488.5h13"/><circle cx="29.5" cy="488.5" r="1.6" fill="#9a9a9a"/><rect x="21.5" y="482.5" width="4" height="4" rx="1.2" fill="#2bd02b" stroke="none"/><rect x="22.5" y="483.5" width="2" height="2" fill="#5cff5c" stroke="none"/><path d="M49.4 490.4l-4.6 4.2" stroke-width="2.6"/><path d="M49 490.8l-4 3.6" stroke="#e8e8e8" stroke-width="0.8" stroke-dasharray="1.2 1"/><circle cx="52.8" cy="486.9" r="4.1" fill="#e2e2ff" stroke-width="1"/><path d="M50.500 486.900h4.600M52.800 484.600v4.600" stroke-width="0.9"/><path d="M52 493h5.400l-2.700 2.700z" fill="#000" stroke="none"/><rect x="43" y="483" width="3" height="3" fill="#3c8c3c" stroke="#8cb08c" stroke-width="0.5"/><path d="M68.500 489.500V484.300a1 1 0 0 1 2 0V487.500M70.500 487V483.200a1 1 0 0 1 2 0V487M72.500 487V483.600a1 1 0 0 1 2 0V487.500M74.500 488V485.300a1 1 0 0 1 2 0V490c0 1.800-1.300 2.800-1.800 4.300M68.500 489.600l-1.400-1.500c-1-1-2.200-.1-1.300 1.100c1.200 1.600 2.100 2.900 3.700 5.100" stroke-width="1.1" stroke-linecap="round"/><rect x="64" y="483" width="3" height="3" fill="#3c8c3c" stroke="#8cb08c" stroke-width="0.5"/></g></svg>
<div class="t" style="left:187.32px;top:487.7px;letter-spacing:-0.758px;">Peaks</div>
<div class="a" style="left:221px;top:479px;width:212px;height:30px;background:#bababa;"></div>
<div class="a" style="left:221px;top:479px;width:212px;height:4px;background:linear-gradient(to bottom,#a8a8a8,#8e8e8e);clip-path:polygon(0 0,100% 0,208px 100%,4px 100%);"></div>
<div class="a" style="left:221px;top:479px;width:4px;height:30px;background:linear-gradient(to right,#a8a8a8,#8e8e8e);clip-path:polygon(0 0,100% 4px,100% 26px,0 100%);"></div>
<div class="a" style="left:225px;top:483px;width:204px;height:22px;background:#a0a0a0;"></div>
<div class="a" style="left:225px;top:482px;width:68px;height:24.5px;background:#a8a8a8;"></div>
<div class="a" style="left:225px;top:482px;width:68px;height:4px;background:linear-gradient(to bottom,#9e9e9e,#8a8a8a);clip-path:polygon(0 0,100% 0,64px 100%,4px 100%);"></div>
<div class="a" style="left:225px;top:482px;width:4px;height:24.5px;background:linear-gradient(to right,#9e9e9e,#8a8a8a);clip-path:polygon(0 0,100% 4px,100% 20.5px,0 100%);"></div>
<div class="a" style="left:229px;top:486px;width:60px;height:16.5px;background:#d2d2d2;"></div>
<div class="t" style="left:230.99px;top:487.7px;letter-spacing:-0.567px;">16.83k</div>
<div class="a" style="left:293px;top:482px;width:68px;height:24.5px;background:#a8a8a8;"></div>
<div class="a" style="left:293px;top:482px;width:68px;height:4px;background:linear-gradient(to bottom,#9e9e9e,#8a8a8a);clip-path:polygon(0 0,100% 0,64px 100%,4px 100%);"></div>
<div class="a" style="left:293px;top:482px;width:4px;height:24.5px;background:linear-gradient(to right,#9e9e9e,#8a8a8a);clip-path:polygon(0 0,100% 4px,100% 20.5px,0 100%);"></div>
<div class="a" style="left:297px;top:486px;width:60px;height:16.5px;background:#d2d2d2;"></div>
<div class="t" style="left:298.99px;top:487.7px;letter-spacing:-0.512px;">1.249</div>
<div class="a" style="left:361px;top:482px;width:68px;height:24.5px;background:#a8a8a8;"></div>
<div class="a" style="left:361px;top:482px;width:68px;height:4px;background:linear-gradient(to bottom,#9e9e9e,#8a8a8a);clip-path:polygon(0 0,100% 0,64px 100%,4px 100%);"></div>
<div class="a" style="left:361px;top:482px;width:4px;height:24.5px;background:linear-gradient(to right,#9e9e9e,#8a8a8a);clip-path:polygon(0 0,100% 4px,100% 20.5px,0 100%);"></div>
<div class="a" style="left:365px;top:486px;width:60px;height:16.5px;background:#bcbcbc;"></div>
<div class="t" style="left:367.43px;top:487.7px;letter-spacing:-0.648px;color:#8c8c8c;">0.000</div>
<div class="frame" style="left:569px;top:476px;width:132px;height:32px;"><div class="l"></div><div class="r" style="background:linear-gradient(to right,#c4c4c4 0,#c0c0c0 6px,#aeaeae 12px,#8a8a8a 13px,#777 14px)"></div><div class="bt"></div></div>
<div class="t" style="left:583.70px;top:489.1px;letter-spacing:-0.090px;">mcpF - 1 nF</div>
<div class="a" style="left:659px;top:490px;width:27px;height:16px;background:#000;"></div>
<svg width="707" height="810"><polyline points="660.5,501.5 668,490.5 676,501.5 684.5,490.5" fill="none" stroke="#7fff00" stroke-width="1.1"/></svg>
<div class="a" style="left:572px;top:476px;width:129px;height:17px;background:#b9b9b9;border-top:1px solid #a4a4a4;box-sizing:border-box;"></div>
<div class="a" style="left:667px;top:476px;width:17px;height:17px;background:linear-gradient(to bottom,#d6d6d6 0,#c6c6c6 5px,#aaaaaa 11px,#8a8a8a 17px);"></div>
<div class="a" style="left:572px;top:476px;width:17px;height:17px;box-sizing:border-box;border:1px solid;border-color:#dcdcdc #8c8c8c #8c8c8c #dcdcdc;background:#c4c4c4;"></div>
<svg width="707" height="810"><polygon points="583,481 583,488 577,484.5" fill="#000"/></svg>
<div class="a" style="left:684px;top:476px;width:17px;height:17px;box-sizing:border-box;border:1px solid;border-color:#dcdcdc #8c8c8c #8c8c8c #dcdcdc;background:#c4c4c4;"></div>
<svg width="707" height="810"><polygon points="690,481 690,488 696,484.5" fill="#000"/></svg>
<div class="frame" style="left:473px;top:475px;width:96px;height:23px;"><div class="l"></div><div class="tp" style="height:1px"></div><div class="r"></div><div class="bt"></div></div>
<div class="t" style="left:487.76px;top:478.8px;letter-spacing:-0.314px;">SiPM</div>
<div class="a" style="left:526px;top:477px;width:28px;height:18px;background:#000;"></div>
<svg width="707" height="810"><polyline points="528,491 535,481 543,491 552,479" fill="none" stroke="#fff" stroke-width="1.1"/></svg>
</body></html>
